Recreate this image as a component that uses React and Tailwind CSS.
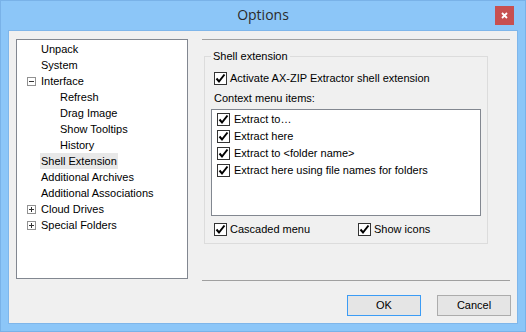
import React from "react";

const font = { fontFamily: '"Liberation Sans", Arial, sans-serif' };

const treeItems = [
  { label: "Unpack", level: 0 },
  { label: "System", level: 0 },
  { label: "Interface", level: 0, toggle: "minus" },
  { label: "Refresh", level: 1 },
  { label: "Drag Image", level: 1 },
  { label: "Show Tooltips", level: 1 },
  { label: "History", level: 1 },
  { label: "Shell Extension", level: 0, selected: true },
  { label: "Additional Archives", level: 0 },
  { label: "Additional Associations", level: 0 },
  { label: "Cloud Drives", level: 0, toggle: "plus" },
  { label: "Special Folders", level: 0, toggle: "plus" },
];

const menuItems = [
  "Extract to…",
  "Extract here",
  "Extract to <folder name>",
  "Extract here using file names for folders",
];

const CheckBox = () => (
  <span className="w-[13px] h-[13px] border border-[#333333] bg-white flex items-center justify-center shrink-0">
    <svg width="11" height="11" viewBox="0 0 11 11">
      <path d="M1.5 5.5 L4 8.5 L9.5 1.5" fill="none" stroke="#000" strokeWidth="2" />
    </svg>
  </span>
);

const Toggle = ({ type }) => (
  <span className="w-[9px] h-[9px] border border-[#919191] bg-white flex items-center justify-center relative">
    <span className="w-[5px] h-px bg-[#333]" />
    {type === "plus" && <span className="absolute w-px h-[5px] bg-[#333]" />}
  </span>
);

const App = () => {
  return (
    <div
      className="w-[526px] h-[332px] bg-[#8cc6f8] border border-[#79b2e8] flex flex-col"
      style={font}
    >
      <div className="h-[29px] relative flex items-center justify-center shrink-0">
        <span
          className="text-[14px] text-[#2b2b2b] -mt-[2px]"
          style={{ fontFamily: '"Open Sans", sans-serif' }}
        >
          Options
        </span>
        <div className="absolute right-[11px] top-[5px] w-[19px] h-[19px] bg-[#c75050] flex items-center justify-center">
          <svg width="7" height="7" viewBox="0 0 7 7">
            <path d="M1 1 L6 6 M6 1 L1 6" stroke="#fff" strokeWidth="1.8" />
          </svg>
        </div>
      </div>

      <div className="ml-[7px] w-[510px] h-[294px] bg-[#f0f0f0] border border-[#7fb6ea] flex flex-col text-[11px] text-black">
        <div className="flex pt-[8px] pl-[7px]">
          <div className="w-[172px] h-[240px] bg-white border border-[#828790] pt-[1px]">
            {treeItems.map((it) => (
              <div key={it.label} className="h-[16px] flex items-center relative">
                {it.toggle && (
                  <span className="absolute left-[10px] top-[4px]">
                    <Toggle type={it.toggle} />
                  </span>
                )}
                <span
                  className={`${it.level === 0 ? "ml-[23px]" : "ml-[42px]"} px-[1px] h-[16px] leading-[16px] ${
                    it.selected ? "bg-[#e8e8e8]" : ""
                  }`}
                >
                  {it.label}
                </span>
              </div>
            ))}
          </div>

          <div className="ml-[14px] w-[308px] h-[242px] border-t border-b border-[#a0a0a0] pt-[16px] pl-[2px]">
            <div className="relative w-[284px] h-[188px] border border-[#dcdcdc] px-[9px] pt-[15px]">
              <span className="absolute -top-[8px] left-[6px] px-[2px] bg-[#f0f0f0] leading-[15px]">
                Shell extension
              </span>
              <label className="flex items-center gap-[3px] h-[13px]">
                <CheckBox />
                <span>Activate AX-ZIP Extractor shell extension</span>
              </label>
              <div className="mt-[6px] leading-[14px]">Context menu items:</div>
              <div className="-ml-[3px] mt-[4px] w-[270px] h-[107px] bg-white border border-[#828790] pt-[1px] pl-[5px]">
                {menuItems.map((m) => (
                  <div key={m} className="h-[17px] flex items-center gap-[4px]">
                    <CheckBox />
                    <span>{m}</span>
                  </div>
                ))}
              </div>
              <div className="flex mt-[7px] h-[13px]">
                <label className="flex items-center gap-[3px] w-[144px]">
                  <CheckBox />
                  <span>Cascaded menu</span>
                </label>
                <label className="flex items-center gap-[3px]">
                  <CheckBox />
                  <span>Show icons</span>
                </label>
              </div>
            </div>
          </div>
        </div>

        <div className="flex justify-end gap-[16px] pr-[6px] mt-[14px]">
          <button className="w-[74px] h-[21px] border border-[#3c9cf5] bg-[#e5e5e5] text-[11px]">
            OK
          </button>
          <button className="w-[74px] h-[21px] border border-[#acacac] bg-[#e5e5e5] text-[11px]">
            Cancel
          </button>
        </div>
      </div>
    </div>
  );
};

export default App;
